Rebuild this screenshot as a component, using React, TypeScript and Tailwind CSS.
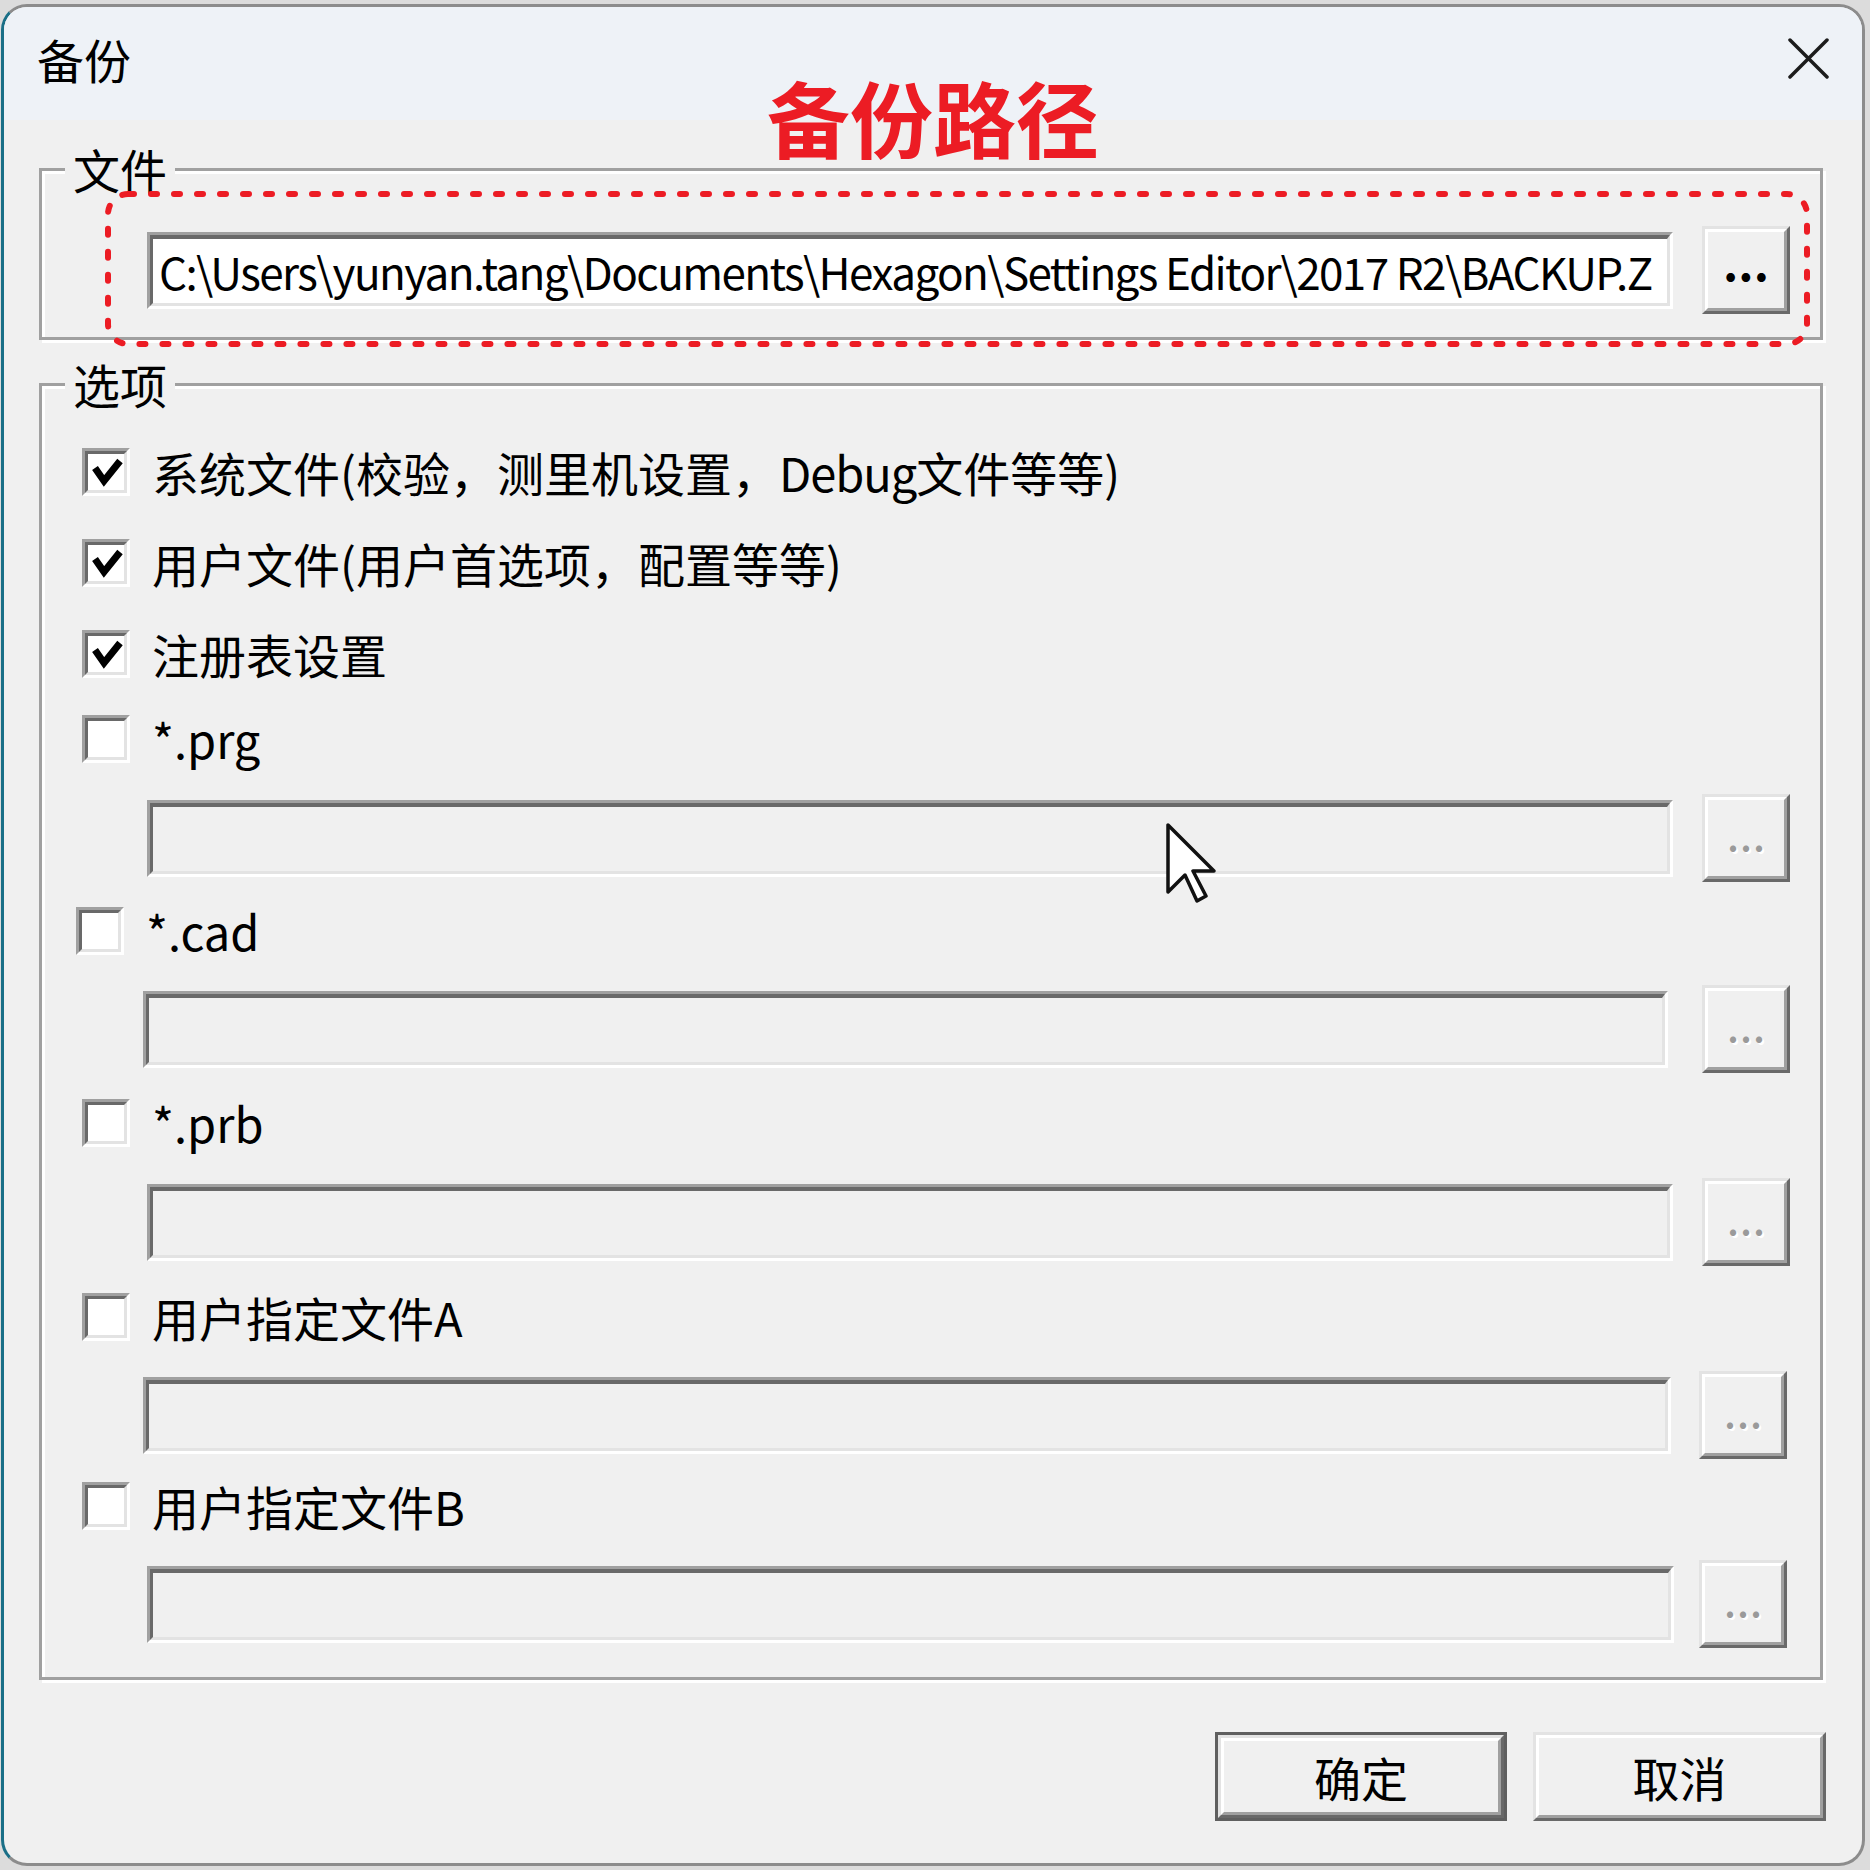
import React from "react";

const PATH = "C:\\Users\\yunyan.tang\\Documents\\Hexagon\\Settings Editor\\2017 R2\\BACKUP.Z";

function Checkbox({ checked }: { checked?: boolean }) {
  return (
    <div className="w-[48px] h-[48px] shrink-0 border-[3px] border-t-[#a0a0a0] border-l-[#a0a0a0] border-b-white border-r-white">
      <div className="w-full h-full border-[3px] border-t-[#696969] border-l-[#696969] border-b-[#e3e3e3] border-r-[#e3e3e3] bg-white">
        {checked && (
          <svg viewBox="0 0 36 36" className="w-full h-full">
            <polyline points="7,14 16,27 32,7" fill="none" stroke="#000" strokeWidth="7" />
          </svg>
        )}
      </div>
    </div>
  );
}

function Field({ value, enabled, className }: { value?: string; enabled?: boolean; className?: string }) {
  return (
    <div className={`h-[77px] min-w-0 border-[3px] border-t-[#a0a0a0] border-l-[#a0a0a0] border-b-white border-r-white ${className ?? ""}`}>
      <div
        className={`h-full border-[3px] border-t-[4px] border-t-[#696969] border-l-[#696969] border-b-[#e3e3e3] border-r-[#e3e3e3] flex items-center pl-[6px] overflow-hidden whitespace-nowrap ${
          enabled ? "bg-white" : "bg-[#f0f0f0]"
        }`}
      >
        {value && <span className="text-[44px] tracking-[-1.6px]">{value}</span>}
      </div>
    </div>
  );
}

function Raised({ children, className, isDefault }: { children?: React.ReactNode; className?: string; isDefault?: boolean }) {
  return (
    <div className={`${isDefault ? "border-[3px] border-[#5f5f5f]" : ""} ${className ?? ""}`}>
      <div className="h-full w-full border-[3px] border-t-[#e3e3e3] border-l-[#e3e3e3] border-b-[#696969] border-r-[#696969]">
        <div className="h-full w-full border-[3px] border-t-white border-l-white border-b-[#a0a0a0] border-r-[#a0a0a0] bg-[#f0f0f0] flex items-center justify-center">
          {children}
        </div>
      </div>
    </div>
  );
}

function Dots({ enabled }: { enabled?: boolean }) {
  return enabled ? (
    <span className="text-black font-bold leading-none -translate-y-[10px]">...</span>
  ) : (
    <span className="text-[#9a9a9a] leading-none -translate-y-[8px] [text-shadow:2px_2px_0_#fff]">...</span>
  );
}

function CheckRow({ label, checked, className }: { label: React.ReactNode; checked?: boolean; className: string }) {
  return (
    <div className={`h-[80px] flex items-center ${className}`}>
      <Checkbox checked={checked} />
      <span className="ml-[22px] whitespace-nowrap">{label}</span>
    </div>
  );
}

function PathRow({ className, gap }: { className: string; gap: string }) {
  return (
    <div className={`h-[88px] flex items-center ${className}`}>
      <Field className="flex-1" />
      <Raised className={`w-[88px] h-[88px] shrink-0 ${gap}`}>
        <Dots />
      </Raised>
    </div>
  );
}

export default function App() {
  return (
    <div className="w-[1870px] h-[1870px] bg-[#dcdcdc] pt-[4px] pl-[1px] font-['Noto_Sans_CJK_SC',sans-serif] text-[47px] leading-[48px] text-black">
      <div className="relative w-[1864px] h-[1862px] rounded-[26px] overflow-hidden border-[3px] border-[#8c8c8c] border-l-[#1a6f87] bg-[#f0f0f0] flex flex-col">
        {/* title bar */}
        <div className="h-[113px] shrink-0 bg-[#eef2f7] flex items-center justify-between pl-[33px] pr-[33px] pb-[10px]">
          <span>备份</span>
          <svg width="41" height="41" viewBox="0 0 41 41">
            <path d="M2 2 L39 39 M39 2 L2 39" stroke="#1c1c1c" strokeWidth="3.5" strokeLinecap="round" />
          </svg>
        </div>

        {/* 文件 */}
        <fieldset className="ml-[35px] mt-[25px] w-[1784px] min-w-0 border-[3px] border-[#a0a0a0] shadow-[inset_3px_3px_0_#fff,3px_3px_0_#fff] p-0">
          <legend className="ml-[23px] px-[8px] bg-[#f0f0f0]">文件</legend>
          <div className="h-[88px] mt-[33px] mb-[23px] flex items-center pl-[105px] pr-[30px]">
            <Field className="flex-1" value={PATH} enabled />
            <Raised className="w-[88px] h-[88px] shrink-0 ml-[29px]">
              <Dots enabled />
            </Raised>
          </div>
        </fieldset>

        {/* 选项 */}
        <fieldset className="ml-[35px] mt-[20px] w-[1784px] min-w-0 border-[3px] border-[#a0a0a0] shadow-[inset_3px_3px_0_#fff,3px_3px_0_#fff] p-0 pb-[29px]">
          <legend className="ml-[23px] px-[8px] bg-[#f0f0f0]">选项</legend>
          <div className="flex flex-col">
            <CheckRow
              className="mt-[24px] pl-[40px]"
              checked
              label={
                <>
                  系统文件(校验，测里机设置，<span className="tracking-[-1px]">Debug</span>文件等等)
                </>
              }
            />
            <CheckRow className="mt-[11px] pl-[40px]" checked label="用户文件(用户首选项，配置等等)" />
            <CheckRow className="mt-[11px] pl-[40px]" checked label="注册表设置" />
            <CheckRow className="mt-[5px] pl-[40px]" label="*.prg" />
            <PathRow className="mt-[15px] pl-[105px] pr-[30px]" gap="ml-[29px]" />
            <CheckRow className="mt-[9px] pl-[34px]" label="*.cad" />
            <PathRow className="mt-[14px] pl-[101px] pr-[30px]" gap="ml-[34px]" />
            <CheckRow className="mt-[10px] pl-[40px]" label="*.prb" />
            <PathRow className="mt-[15px] pl-[105px] pr-[30px]" gap="ml-[29px]" />
            <CheckRow className="mt-[11px] pl-[40px]" label="用户指定文件A" />
            <PathRow className="mt-[14px] pl-[101px] pr-[33px]" gap="ml-[28px]" />
            <CheckRow className="mt-[7px] pl-[40px]" label="用户指定文件B" />
            <PathRow className="mt-[14px] pl-[105px] pr-[33px]" gap="ml-[25px]" />
          </div>
        </fieldset>

        {/* buttons */}
        <div className="mt-[52px] flex justify-end gap-[26px] pr-[36px]">
          <Raised isDefault className="w-[292px] h-[89px]">
            <span>确定</span>
          </Raised>
          <Raised className="w-[293px] h-[89px]">
            <span>取消</span>
          </Raised>
        </div>

        {/* annotation overlay */}
        <div className="absolute left-[763px] top-[68px] text-[83px] leading-none font-bold text-[#ec1c24] whitespace-nowrap">
          备份路径
        </div>
        <svg className="absolute left-[101px] top-[184px]" width="1705" height="156" viewBox="0 0 1705 156">
          <rect x="3" y="3" width="1699" height="150" rx="20" fill="none" stroke="#ec1c24" strokeWidth="6" strokeDasharray="6 17" strokeLinecap="round" />
        </svg>

        {/* mouse cursor */}
        <svg className="absolute left-[1162px] top-[816px]" width="52" height="82" viewBox="0 0 52 82">
          <path d="M2 2 L2 69 L19 52 L31 78 L40 73 L27 48 L48 48 Z" fill="#fff" stroke="#111" strokeWidth="3.5" strokeLinejoin="round" />
        </svg>
      </div>
    </div>
  );
}
